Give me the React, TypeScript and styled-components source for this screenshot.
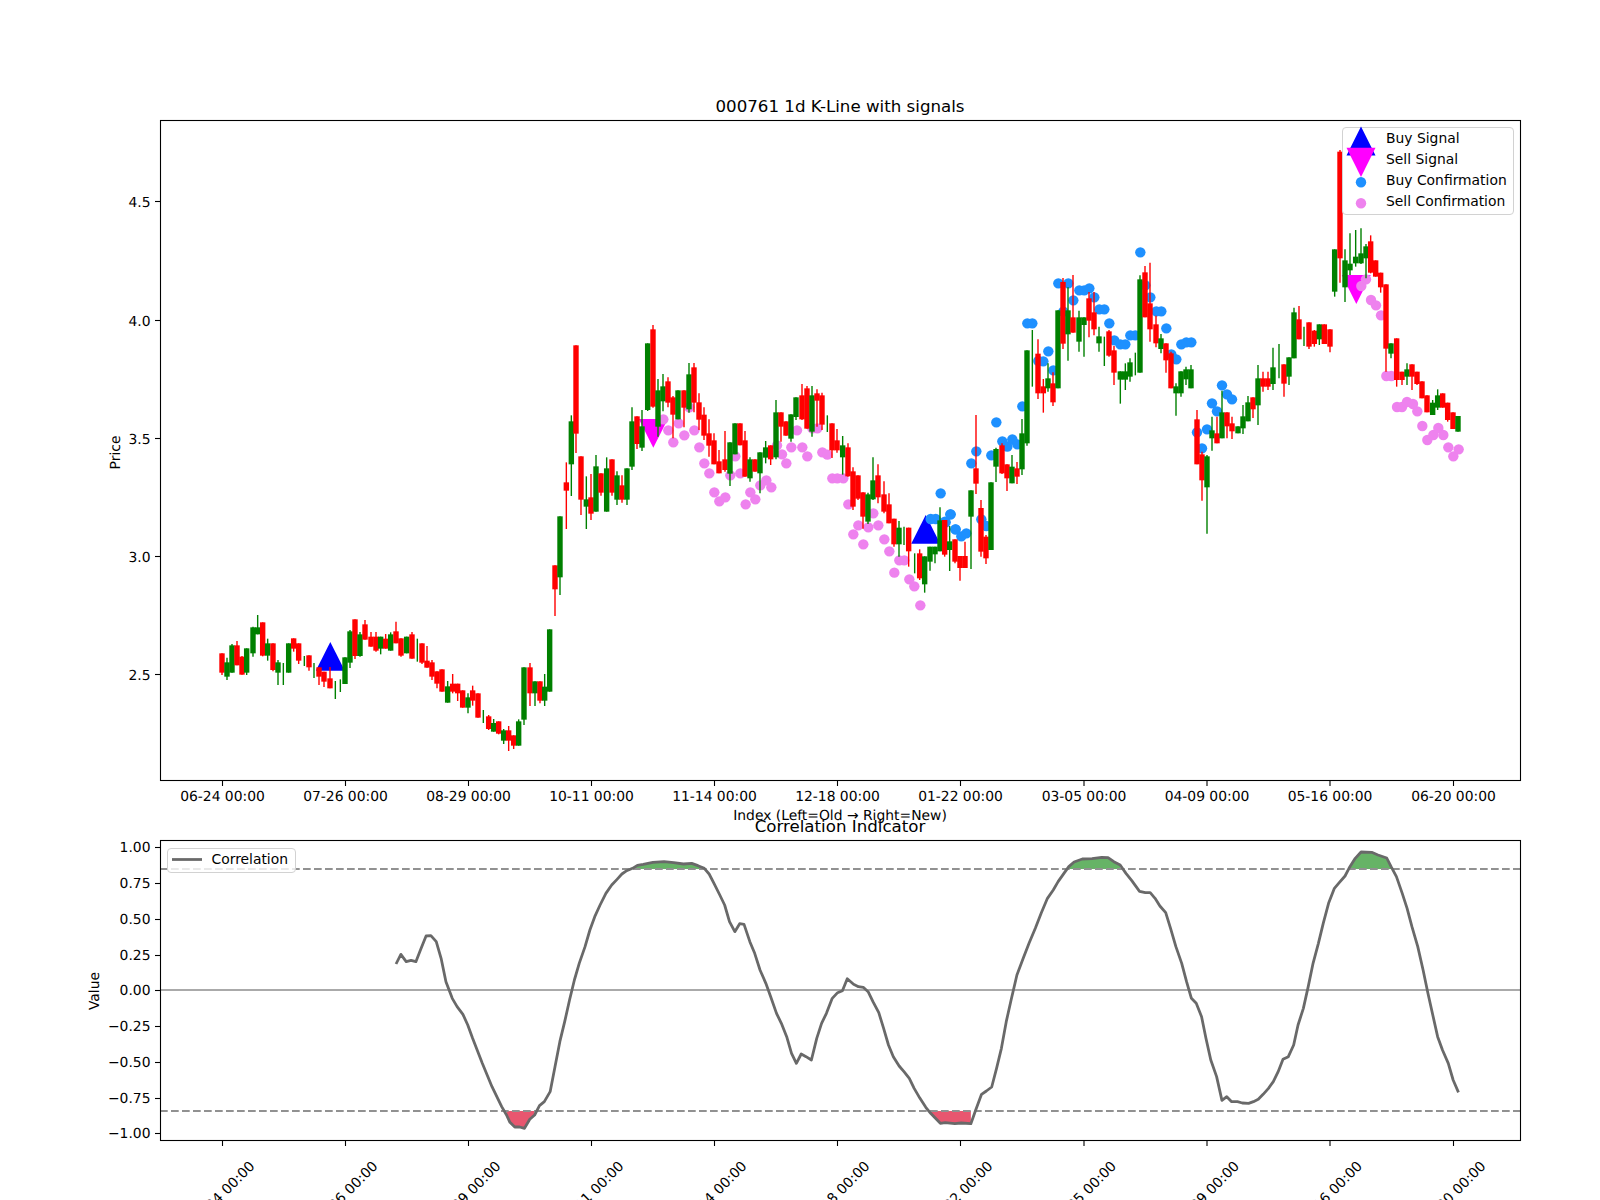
import styled, { createGlobalStyle } from 'styled-components'

type Candle = [string, number, number, number, number, number]
type Point = [number, number]

const FONT = `"DejaVu Sans", "Liberation Sans", sans-serif`

// every table below was read off a crop, so each one keeps the crop origin and scale
const place = (rows: Candle[], x0: number, y0: number): Candle[] =>
	rows.map(([c, x, wt, bt, bb, wb]) => [c, x0 + x / 3, y0 + wt / 3, y0 + bt / 3, y0 + bb / 3, y0 + wb / 3])

const placeDots = (rows: number[][], x0: number, y0: number): Point[] =>
	rows.map(([x, y]) => [x0 + x / 3, y0 + y / 3])

const CANDLES_A: Candle[] = [
	['r', 246, 340, 340, 398, 405], ['g', 261, 353, 367, 410, 420], ['g', 276, 312, 316, 398, 398],
	['r', 291, 303, 316, 376, 376], ['r', 306, 348, 350, 404, 404], ['g', 320, 325, 325, 398, 405],
	['g', 339, 260, 262, 340, 350], ['g', 353, 225, 262, 283, 283], ['r', 368, 247, 247, 347, 349],
	['g', 383, 296, 310, 347, 362], ['r', 399, 310, 310, 390, 394], ['g', 414, 360, 367, 398, 435],
	['g', 430, 369, 369, 369, 435], ['g', 446, 310, 310, 398, 398], ['r', 461, 295, 295, 326, 335],
	['r', 476, 310, 310, 362, 372], ['g', 493, 348, 348, 348, 378], ['r', 507, 346, 346, 382, 392],
	['g', 522, 369, 369, 369, 414], ['r', 537, 382, 382, 410, 435], ['r', 552, 395, 395, 425, 441],
	['r', 570, 381, 415, 445, 445], ['g', 586, 423, 423, 423, 477], ['g', 601, 418, 418, 418, 456],
	['g', 615, 352, 352, 432, 432], ['g', 630, 270, 274, 368, 384], ['r', 645, 238, 238, 348, 357],
	['g', 660, 276, 283, 348, 350], ['r', 675, 240, 253, 299, 299], ['r', 693, 276, 290, 320, 320],
	['r', 708, 276, 290, 332, 335], ['g', 722, 290, 290, 326, 343], ['r', 737, 282, 296, 326, 326],
	['g', 752, 277, 283, 332, 332], ['r', 768, 245, 274, 310, 310], ['r', 783, 295, 295, 347, 350],
	['g', 800, 290, 290, 340, 340], ['r', 816, 276, 283, 356, 356], ['g', 832, 296, 296, 296, 365],
	['r', 846, 310, 310, 368, 372], ['r', 861, 318, 362, 383, 383], ['r', 876, 360, 367, 410, 420],
	['r', 891, 394, 394, 431, 445], ['r', 906, 388, 388, 455, 455], ['g', 923, 423, 439, 488, 488],
	['r', 938, 402, 431, 455, 460], ['r', 953, 431, 431, 460, 483], ['r', 968, 451, 451, 503, 503],
	['g', 984, 460, 472, 503, 520], ['r', 998, 437, 451, 482, 497], ['r', 1014, 460, 460, 533, 533],
	['g', 1030, 510, 510, 510, 549], ['r', 1046, 525, 529, 567, 570], ['g', 1061, 537, 549, 575, 575],
	['r', 1076, 544, 544, 581, 583], ['g', 1091, 567, 571, 602, 612], ['r', 1106, 558, 571, 602, 633],
	['r', 1121, 586, 586, 617, 627], ['g', 1136, 538, 544, 617, 617], ['g', 1152, 382, 382, 539, 555],
	['r', 1170, 369, 382, 460, 498], ['g', 1185, 424, 424, 460, 498], ['r', 1200, 424, 424, 482, 490],
	['g', 1214, 402, 440, 482, 498], ['g', 1229, 268, 268, 455, 455],
]

const CANDLES_B: Candle[] = [
	['r', 45, 796, 796, 868, 948], ['g', 60, 649, 649, 832, 885], ['r', 79, 487, 547, 572, 687],
	['g', 94, 346, 364, 493, 588], ['r', 108, 136, 136, 401, 459], ['r', 123, 469, 469, 599, 645],
	['g', 139, 529, 598, 620, 687], ['r', 153, 522, 592, 641, 660], ['g', 168, 465, 499, 635, 635],
	['r', 183, 520, 520, 578, 587], ['g', 200, 472, 505, 635, 635], ['r', 216, 478, 478, 578, 587],
	['g', 231, 514, 526, 599, 615], ['r', 246, 526, 556, 599, 608], ['g', 261, 505, 505, 599, 615],
	['g', 276, 322, 364, 500, 510], ['r', 291, 349, 349, 432, 447], ['g', 306, 330, 379, 443, 453],
	['g', 323, 130, 130, 330, 333], ['r', 339, 75, 88, 320, 323], ['g', 354, 237, 271, 380, 410],
	['g', 369, 222, 259, 304, 334], ['r', 384, 232, 244, 308, 322], ['r', 399, 288, 292, 344, 415],
	['g', 414, 271, 271, 358, 358], ['r', 432, 271, 271, 323, 382], ['g', 447, 189, 223, 328, 338],
	['r', 462, 189, 202, 308, 337], ['r', 477, 280, 307, 359, 390], ['r', 492, 322, 344, 407, 420],
	['r', 507, 358, 400, 437, 470], ['r', 522, 400, 421, 493, 493], ['r', 537, 450, 484, 520, 520],
	['r', 555, 393, 478, 510, 515], ['g', 570, 427, 427, 521, 558], ['g', 585, 370, 370, 463, 463],
	['r', 600, 370, 370, 436, 436], ['r', 615, 393, 421, 530, 530], ['g', 630, 472, 478, 535, 545],
	['r', 645, 478, 478, 515, 515], ['g', 660, 457, 457, 520, 580], ['g', 677, 423, 442, 473, 490],
	['r', 692, 436, 436, 478, 495], ['g', 708, 300, 337, 472, 478], ['r', 723, 337, 337, 380, 425],
	['r', 738, 364, 364, 407, 407], ['g', 753, 343, 343, 416, 425], ['g', 768, 292, 292, 351, 360],
	['r', 786, 252, 286, 358, 360], ['r', 801, 258, 265, 386, 386], ['g', 816, 258, 286, 395, 410],
	['r', 831, 268, 280, 302, 380], ['r', 846, 278, 286, 374, 390], ['g', 862, 346, 346, 346, 396],
	['r', 876, 370, 370, 451, 474], ['r', 891, 387, 421, 451, 458], ['g', 908, 408, 436, 472, 524],
	['r', 924, 430, 442, 529, 530], ['r', 939, 502, 514, 620, 630], ['r', 954, 526, 526, 596, 600],
	['r', 969, 577, 577, 650, 686], ['g', 984, 578, 583, 665, 672], ['g', 999, 472, 541, 598, 600],
	['r', 1014, 493, 526, 592, 610], ['r', 1032, 544, 583, 635, 640], ['r', 1047, 580, 613, 670, 670],
	['r', 1062, 656, 656, 733, 740], ['g', 1077, 663, 683, 733, 770], ['g', 1092, 680, 680, 680, 735],
	['r', 1106, 683, 683, 754, 800], ['g', 1124, 760, 760, 760, 820], ['r', 1139, 748, 760, 835, 840],
	['g', 1154, 769, 769, 853, 878], ['g', 1170, 740, 740, 785, 812], ['g', 1185, 740, 740, 763, 790],
	['g', 1200, 622, 661, 754, 754],
]

const CANDLES_C: Candle[] = [
	['r', 14, 900, 900, 1004, 1010], ['g', 29, 918, 964, 990, 1053], ['r', 45, 958, 958, 1025, 1030],
	['r', 60, 1008, 1008, 1044, 1082], ['r', 75, 965, 1008, 1044, 1044], ['g', 93, 811, 811, 890, 1047],
	['r', 108, 585, 745, 791, 822], ['r', 123, 840, 864, 995, 1010], ['r', 138, 945, 950, 1015, 1032],
	['g', 153, 787, 787, 990, 990], ['g', 168, 683, 687, 740, 786], ['r', 186, 670, 676, 760, 762],
	['r', 201, 733, 733, 775, 813], ['g', 216, 705, 740, 790, 790], ['r', 231, 726, 745, 770, 792],
	['g', 246, 597, 640, 748, 765], ['g', 261, 391, 391, 670, 677], ['g', 277, 330, 330, 330, 500],
	['r', 294, 358, 401, 520, 537], ['r', 310, 477, 499, 520, 578], ['g', 324, 430, 475, 505, 515],
	['r', 339, 457, 490, 547, 558], ['g', 354, 271, 271, 505, 505], ['r', 369, 174, 186, 371, 387],
	['g', 384, 202, 271, 343, 422], ['r', 399, 165, 292, 338, 338], ['g', 417, 272, 292, 365, 395],
	['g', 432, 292, 292, 315, 410], ['r', 447, 216, 235, 302, 352], ['r', 462, 216, 277, 328, 346],
	['g', 477, 320, 349, 370, 395], ['g', 493, 350, 350, 350, 438], ['r', 507, 330, 334, 407, 410],
	['r', 522, 378, 391, 458, 495], ['g', 541, 454, 454, 479, 551], ['g', 556, 430, 454, 479, 510],
	['g', 570, 415, 427, 470, 485], ['g', 586, 398, 398, 398, 466], ['g', 600, 166, 178, 458, 458],
	['r', 615, 138, 157, 292, 292], ['r', 630, 128, 250, 328, 365], ['r', 648, 287, 313, 370, 382],
	['g', 663, 342, 355, 387, 400], ['r', 678, 370, 370, 421, 458], ['r', 693, 395, 400, 505, 505],
	['g', 708, 490, 499, 520, 587], ['g', 723, 454, 454, 520, 530], ['g', 738, 440, 448, 478, 495],
	['g', 753, 435, 448, 505, 505], ['r', 771, 570, 598, 733, 733], ['r', 786, 695, 703, 781, 842],
	['g', 801, 705, 709, 802, 941], ['g', 816, 590, 631, 655, 692], ['r', 831, 590, 640, 670, 670],
	['g', 846, 512, 577, 655, 655], ['r', 861, 577, 577, 619, 655], ['r', 876, 590, 610, 634, 657],
	['g', 894, 619, 619, 640, 640], ['g', 909, 555, 589, 625, 642], ['g', 924, 528, 547, 604, 604],
	['r', 939, 532, 532, 568, 594], ['g', 954, 435, 475, 556, 615],
]

const CANDLES_D: Candle[] = [
	['r', 9, 785, 805, 830, 845], ['r', 24, 785, 805, 830, 840], ['g', 39, 713, 772, 822, 840],
	['g', 57, 702, 702, 702, 805], ['r', 72, 763, 763, 821, 860], ['g', 87, 742, 742, 800, 825],
	['g', 102, 593, 607, 745, 745], ['r', 117, 588, 628, 688, 688], ['g', 132, 650, 650, 650, 708],
	['r', 147, 637, 637, 710, 717], ['r', 163, 660, 662, 702, 710], ['g', 178, 643, 643, 688, 705],
	['r', 193, 643, 643, 702, 702], ['r', 210, 658, 658, 710, 727], ['g', 224, 418, 418, 545, 560],
	['r', 240, 120, 125, 445, 518], ['g', 255, 418, 451, 532, 576], ['g', 270, 370, 461, 481, 495],
	['g', 287, 360, 440, 460, 470], ['g', 303, 355, 430, 460, 462], ['g', 318, 402, 409, 445, 505],
	['r', 332, 376, 394, 488, 490], ['r', 347, 451, 451, 500, 500], ['r', 362, 488, 488, 532, 548],
	['r', 378, 523, 523, 716, 785], ['g', 393, 700, 700, 731, 745], ['r', 410, 685, 685, 810, 830],
	['r', 426, 785, 785, 810, 825], ['g', 441, 760, 778, 800, 825], ['r', 456, 763, 763, 800, 840],
	['r', 471, 785, 785, 822, 825], ['r', 486, 814, 814, 865, 865], ['r', 501, 856, 856, 907, 907],
	['g', 518, 870, 878, 915, 915], ['g', 533, 838, 856, 893, 900], ['r', 548, 850, 850, 893, 893],
	['r', 563, 878, 878, 930, 935], ['r', 579, 907, 907, 957, 957], ['g', 594, 918, 918, 965, 965],
]

const CANDLES: Candle[] = [
	...place(CANDLES_A, 140, 540),
	...place(CANDLES_B, 540, 300),
	...place(CANDLES_C, 940, 220),
	...place(CANDLES_D, 1260, 110),
]

const BUY_DOTS: Point[] = [
	...placeDots([[1172, 657], [1187, 657], [1202, 580], [1217, 667], [1232, 643], [1247, 688]], 540, 300),
	...placeDots([
		[15, 905], [31, 883], [46, 928], [64, 949], [79, 940], [124, 898], [139, 918], [94, 730], [109, 694],
		[154, 706], [169, 607], [187, 664], [202, 680], [217, 658], [232, 673], [247, 559], [262, 310], [277, 310],
		[295, 423], [310, 424], [325, 394], [340, 451], [355, 190], [370, 275], [385, 190], [400, 241], [418, 211],
		[433, 211], [448, 205], [463, 232], [478, 268], [493, 268], [508, 310], [523, 361], [541, 373], [556, 373],
		[571, 346], [586, 346], [601, 97], [616, 196], [631, 232], [649, 274], [664, 274], [679, 325], [694, 403],
		[709, 418], [724, 373], [739, 367], [754, 367], [771, 637], [786, 685], [801, 628], [816, 550], [831, 574],
		[846, 496], [861, 523], [876, 538],
	], 940, 220),
]

const SELL_DOTS: Point[] = [
	...placeDots([
		[370, 358], [385, 391], [400, 427], [416, 370], [433, 406], [448, 322], [463, 391], [478, 442], [493, 490],
		[508, 520], [523, 577], [538, 604], [556, 592], [571, 526], [586, 469], [601, 520], [617, 613], [631, 577],
		[646, 598], [661, 556], [679, 541], [694, 562], [711, 436], [726, 463], [739, 490], [754, 442], [771, 391],
		[787, 442], [802, 469], [817, 385], [832, 385], [847, 457], [862, 464], [877, 535], [892, 535], [910, 535],
		[925, 613], [940, 703], [955, 676], [970, 733], [985, 682], [1000, 640], [1015, 676], [1033, 718], [1048, 754],
		[1063, 818], [1078, 781], [1093, 781], [1108, 838], [1123, 859], [1141, 916],
	], 540, 300),
	...placeDots([
		[304, 528], [318, 508], [333, 570], [348, 586], [363, 616], [379, 798], [394, 798], [411, 891], [426, 891],
		[441, 876], [459, 882], [472, 904], [487, 948], [502, 990], [520, 975], [535, 954], [550, 975], [565, 1012],
		[580, 1039], [596, 1018],
	], 1260, 110),
]

const LEFT_CURVE: number[][] = [
	[652, 492], [662, 463], [673, 485], [683, 481], [693, 485], [703, 448], [714, 408], [724, 407], [735, 425],
	[745, 475], [755, 545], [768, 595], [778, 620], [790, 643], [800, 675], [810, 715], [820, 752], [830, 790],
	[840, 825], [850, 860], [860, 890], [870, 920], [880, 945], [887, 967], [897, 981], [907, 981], [917, 985],
	[928, 958], [938, 945], [948, 917], [958, 905], [970, 875], [980, 800], [990, 725], [1000, 665], [1010, 600],
	[1020, 540], [1030, 490], [1042, 440], [1052, 390], [1062, 350], [1073, 315], [1085, 280], [1097, 255],
	[1108, 238], [1118, 222], [1128, 212], [1140, 205], [1150, 196], [1162, 193], [1172, 190], [1182, 187],
	[1205, 185], [1225, 188], [1245, 192], [1262, 190], [1275, 197], [1288, 205], [1298, 222], [1308, 250],
	[1320, 285], [1330, 315], [1340, 365], [1351, 395], [1361, 371], [1370, 373], [1382, 425], [1392, 460],
	[1403, 510], [1415, 550], [1425, 590], [1437, 640], [1447, 670], [1458, 710], [1468, 760], [1478, 790],
	[1488, 762], [1498, 770], [1509, 780], [1520, 715], [1530, 670], [1540, 640], [1552, 595], [1563, 578],
]

const RIGHT_CURVE: number[][] = [
	[5, 572], [15, 536], [28, 553], [38, 560], [48, 562], [58, 575], [68, 605], [80, 638], [90, 685], [100, 735],
	[110, 770], [122, 798], [132, 815], [143, 835], [153, 865], [165, 895], [177, 922], [187, 940], [197, 955],
	[207, 970], [217, 968], [237, 971], [250, 969], [270, 971], [280, 930], [292, 883], [302, 873], [313, 861],
	[323, 805], [333, 745], [343, 665], [353, 600], [365, 525], [378, 475], [390, 430], [403, 385], [415, 340],
	[428, 295], [440, 270], [450, 245], [462, 220], [472, 200], [483, 186], [500, 177], [520, 176], [540, 172],
	[553, 173], [565, 185], [578, 195], [590, 220], [602, 242], [618, 274], [630, 278], [640, 278], [650, 295],
	[660, 318], [672, 338], [682, 385], [693, 440], [705, 490], [715, 545], [725, 595], [735, 610], [746, 650],
	[755, 715], [765, 780], [777, 830], [788, 901], [798, 890], [808, 905], [820, 905], [830, 909], [843, 910],
	[853, 905], [863, 898], [873, 883], [884, 865], [894, 845], [904, 815], [914, 778], [925, 770], [936, 735],
	[945, 675], [956, 625], [966, 560], [976, 490], [987, 430], [997, 370], [1008, 310], [1020, 265], [1030, 248],
	[1042, 228], [1052, 200], [1063, 175], [1075, 156], [1097, 157], [1110, 165], [1128, 174], [1137, 200],
	[1148, 230], [1160, 280], [1170, 325], [1180, 380], [1192, 440], [1203, 510], [1213, 580], [1223, 645],
	[1233, 710], [1243, 750], [1255, 790], [1265, 840], [1276, 877],
]

const CURVE_X_SCALE = 1568 / 760
const curvePoint = (x0: number) => ([x, y]: number[]): Point => [x0 + x / CURVE_X_SCALE, 800 + y / 3]
const CURVE: Point[] = [...LEFT_CURVE.map(curvePoint(80)), ...RIGHT_CURVE.map(curvePoint(840))]

const HIGH_LEVEL = 869
const LOW_LEVEL = 1111

// same idea as fill_between(where=...): one polygon for each run of samples beyond the level
const zones = (level: number, beyond: (y: number) => boolean) => {
	const runs: Point[][] = []
	let run: Point[] = []
	for (const point of CURVE) {
		if (beyond(point[1])) run.push(point)
		else if (run.length) {
			runs.push(run)
			run = []
		}
	}
	return runs.map(r => [...r, [r[r.length - 1][0], level], [r[0][0], level]].map(p => p.join(',')).join(' '))
}

const TICKS = [
	['06-24 00:00', 222.5], ['07-26 00:00', 345.5], ['08-29 00:00', 468.5], ['10-11 00:00', 591.5],
	['11-14 00:00', 714.5], ['12-18 00:00', 837.5], ['01-22 00:00', 960.5], ['03-05 00:00', 1084],
	['04-09 00:00', 1207], ['05-16 00:00', 1330], ['06-20 00:00', 1453.5],
] as const

const PRICE_TICKS = [
	['2.5', 674.5], ['3.0', 556.5], ['3.5', 438.5], ['4.0', 320.5], ['4.5', 201.5],
] as const

const VALUE_TICKS = [
	['1.00', 847.5], ['0.75', 883.5], ['0.50', 919.5], ['0.25', 955.5], ['0.00', 990.5],
	['−0.25', 1026.5], ['−0.50', 1062.5], ['−0.75', 1098.5], ['−1.00', 1133.5],
] as const

const triangle = (cx: number, tip: number, base: number) =>
	`${cx},${tip} ${cx + 14.5},${base} ${cx - 14.5},${base}`

const COLORS: Record<string, string> = { r: '#ff0000', g: '#008000' }

const GlobalStyle = createGlobalStyle`
	html, body {
		margin: 0;
		background: #fff;
	}
`

const Figure = styled.div`
	width: 1600px;
	height: 1200px;
	padding-top: 97px;
	box-sizing: border-box;
	overflow: hidden;
	font-family: ${FONT};
	color: #000;
	display: flex;
	flex-direction: column;
`

const Title = styled.h2<{ $height: number }>`
	margin: 0 80px 0 160px;
	height: ${p => p.$height}px;
	line-height: 20px;
	font-size: 16.67px;
	font-weight: 400;
	text-align: center;
	flex: none;
	position: relative;
	z-index: 1;
`

const Plot = styled.div<{ $height: number }>`
	position: relative;
	height: ${p => p.$height}px;
	flex: none;
`

const Drawing = styled.svg`
	display: block;
	overflow: visible;
	font-family: ${FONT};
	font-size: 13.89px;
	text-rendering: geometricPrecision;
`

const Legend = styled.ul<{ $left: number; $top: number; $columns: string }>`
	position: absolute;
	left: ${p => p.$left}px;
	top: ${p => p.$top}px;
	margin: 0;
	padding: 0 6.5px 2px 3px;
	list-style: none;
	display: grid;
	grid-template-columns: ${p => p.$columns};
	grid-auto-rows: 21px;
	align-items: center;
	background: rgba(255, 255, 255, 0.8);
	border: 1px solid #d2d2d2;
	border-radius: 4px;
	font-size: 13.89px;
	line-height: 21px;
	white-space: nowrap;
`

const LegendRow = styled.li`
	display: contents;
`

const LegendMark = styled.svg`
	display: block;
	width: 30px;
	height: 21px;
	overflow: visible;
`

const PriceChart = () => (
	<Drawing width={1600} height={697} viewBox="0 120 1600 697">
		<polygon points={triangle(330.3, 642, 670.7)} fill="#0000ff" />
		<polygon points={triangle(925.7, 515, 543.7)} fill="#0000ff" />
		<polygon points={triangle(653.3, 447.7, 419)} fill="#ff00ff" />
		<polygon points={triangle(1356.3, 304, 275)} fill="#ff00ff" />
		{SELL_DOTS.map(([x, y], i) => <circle key={i} cx={x} cy={y} r={5.2} fill="#ee82ee" />)}
		{BUY_DOTS.map(([x, y], i) => <circle key={i} cx={x} cy={y} r={5.2} fill="#1e90ff" />)}
		{CANDLES.map(([c, x, wt, bt, bb, wb], i) => (
			<g key={i} fill={COLORS[c]} stroke={COLORS[c]}>
				<line x1={x} x2={x} y1={wt} y2={wb} strokeWidth={1.4} />
				{bb > bt && <rect x={x - 2.7} y={bt} width={5.4} height={bb - bt} stroke="none" />}
			</g>
		))}
		<rect x={160.5} y={120.5} width={1360} height={660} fill="none" stroke="#000" strokeWidth={1.1} />
		{PRICE_TICKS.map(([label, y]) => (
			<g key={label}>
				<line x1={155} x2={160} y1={y} y2={y} stroke="#000" strokeWidth={1.1} />
				<text x={150.5} y={y + 5} textAnchor="end">{label}</text>
			</g>
		))}
		{TICKS.map(([label, x]) => (
			<g key={label}>
				<line x1={x} x2={x} y1={781} y2={786} stroke="#000" strokeWidth={1.1} />
				<text x={x} y={801} textAnchor="middle">{label}</text>
			</g>
		))}
		<text x={840} y={820} textAnchor="middle">Index (Left=Old → Right=New)</text>
		<text transform="translate(120 452.5) rotate(-90)" textAnchor="middle">Price</text>
	</Drawing>
)

const CorrelationChart = () => (
	<Drawing width={1600} height={360} viewBox="0 840 1600 360">
		{zones(HIGH_LEVEL, y => y < HIGH_LEVEL).map((points, i) => <polygon key={i} points={points} fill="#66b366" />)}
		{zones(LOW_LEVEL, y => y > LOW_LEVEL).map((points, i) => <polygon key={i} points={points} fill="#e8566f" />)}
		<line x1={160} x2={1520} y1={990} y2={990} stroke="#aaa" strokeWidth={2} />
		<line x1={160} x2={1520} y1={HIGH_LEVEL} y2={HIGH_LEVEL} stroke="#919191" strokeWidth={2.08} strokeDasharray="7.7 3.3" />
		<line x1={160} x2={1520} y1={LOW_LEVEL} y2={LOW_LEVEL} stroke="#919191" strokeWidth={2.08} strokeDasharray="7.7 3.3" />
		<polyline points={CURVE.map(p => p.join(',')).join(' ')} fill="none" stroke="#696969" strokeWidth={2.78} strokeLinejoin="round" />
		<rect x={160.5} y={840.5} width={1360} height={300} fill="none" stroke="#000" strokeWidth={1.1} />
		{VALUE_TICKS.map(([label, y]) => (
			<g key={label}>
				<line x1={155} x2={160} y1={y} y2={y} stroke="#000" strokeWidth={1.1} />
				<text x={150.5} y={y + 4.5} textAnchor="end">{label}</text>
			</g>
		))}
		{TICKS.map(([label, x]) => (
			<g key={label}>
				<line x1={x} x2={x} y1={1141} y2={1146} stroke="#000" strokeWidth={1.1} />
				<text transform={`translate(${x - 0.5} 1193.3) rotate(-45)`} y={5} textAnchor="middle">{label}</text>
			</g>
		))}
		<text transform="translate(99 991) rotate(-90)" textAnchor="middle">Value</text>
	</Drawing>
)

export default function App() {
	return (
		<Figure>
			<GlobalStyle />
			<Title $height={23}>000761 1d K-Line with signals</Title>
			<Plot $height={697}>
				<PriceChart />
				<Legend $left={1342} $top={7} $columns="40px auto">
					<LegendRow>
						<LegendMark viewBox="0 0 30 21"><polygon points="15,-1.5 29.5,27.5 0.5,27.5" fill="#0000ff" /></LegendMark>
						<span>Buy Signal</span>
					</LegendRow>
					<LegendRow>
						<LegendMark viewBox="0 0 30 21"><polygon points="15,28 29.5,-1.2 0.5,-1.2" fill="#ff00ff" /></LegendMark>
						<span>Sell Signal</span>
					</LegendRow>
					<LegendRow>
						<LegendMark viewBox="0 0 30 21"><circle cx={15} cy={12.3} r={5.2} fill="#1e90ff" /></LegendMark>
						<span>Buy Confirmation</span>
					</LegendRow>
					<LegendRow>
						<LegendMark viewBox="0 0 30 21"><circle cx={15} cy={12.3} r={5.2} fill="#ee82ee" /></LegendMark>
						<span>Sell Confirmation</span>
					</LegendRow>
				</Legend>
			</Plot>
			<Title $height={23}>Correlation Indicator</Title>
			<Plot $height={360}>
				<CorrelationChart />
				<Legend $left={167} $top={8} $columns="40.5px auto">
					<LegendRow>
						<LegendMark viewBox="0 0 30 21"><line x1={1} x2={31} y1={10.5} y2={10.5} stroke="#696969" strokeWidth={2.78} /></LegendMark>
						<span>Correlation</span>
					</LegendRow>
				</Legend>
			</Plot>
		</Figure>
	)
}
